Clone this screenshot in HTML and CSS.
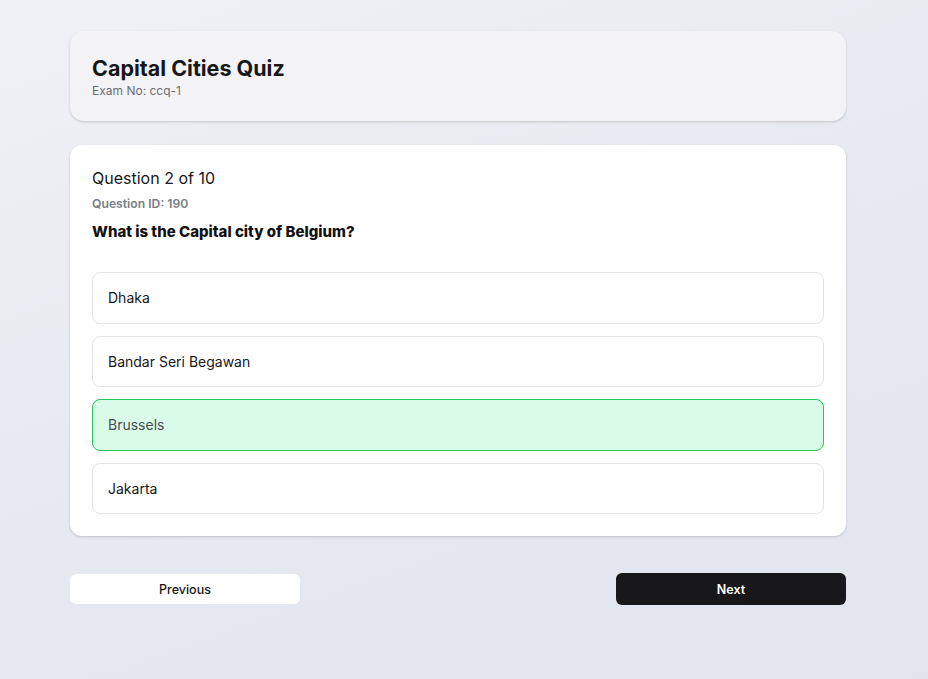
FILE: index.html
```html
<!DOCTYPE html>
<html>
<head>
<meta charset="utf-8">
<link rel="stylesheet" href="styles.css">
</head>
<body>
<div class="page">
  <header class="exam-card">
    <h1 class="exam-title">Capital Cities Quiz</h1>
    <div class="exam-no">Exam No: ccq-1</div>
  </header>
  <section class="question-card">
    <div class="q-count">Question 2 of 10</div>
    <div class="q-id">Question ID: 190</div>
    <div class="q-text">What is the Capital city of Belgium?</div>
    <div class="options">
      <div class="option">Dhaka</div>
      <div class="option">Bandar Seri Begawan</div>
      <div class="option selected">Brussels</div>
      <div class="option">Jakarta</div>
    </div>
  </section>
  <nav class="nav-row">
    <button class="btn btn-prev">Previous</button>
    <button class="btn btn-next">Next</button>
  </nav>
</div>
</body>
</html>
```
FILE: styles.css
```css
html, body {
  margin: 0;
  padding: 0;
  height: 100%;
}
body {
  background: linear-gradient(160deg, #f0f1f6 0%, #e8eaf1 45%, #e1e5ee 100%);
  font-family: Inter, "Liberation Sans", sans-serif;
  color: #111214;
}
.page {
  width: 776px;
  margin-left: 70px;
  padding-top: 31px;
  display: flex;
  flex-direction: column;
}
.exam-card {
  background: #f3f3f6;
  border-radius: 14px;
  height: 90px;
  box-sizing: border-box;
  padding: 24px 22px;
  box-shadow: 0 1px 3px rgba(0,0,0,0.12), 0 1px 2px rgba(0,0,0,0.06);
}
.exam-title {
  margin: 0;
  font-size: 21.5px;
  font-weight: 700;
  line-height: 26px;
  color: #16171a;
}
.exam-no {
  margin-top: 2px;
  font-size: 12px;
  line-height: 16px;
  color: #6b6e74;
}
.question-card {
  margin-top: 24px;
  background: #ffffff;
  border-radius: 12px;
  padding: 22px 22px 22px 22px;
  box-shadow: 0 1px 3px rgba(0,0,0,0.12), 0 1px 2px rgba(0,0,0,0.06);
}
.q-count {
  font-size: 16px;
  line-height: 22px;
  color: #16171a;
}
.q-id {
  margin-top: 7px;
  font-size: 12.2px;
  font-weight: 600;
  line-height: 16px;
  color: #7a7d83;
}
.q-text {
  margin-top: 11px;
  font-size: 15px;
  font-weight: 800;
  line-height: 18px;
  color: #111214;
}
.options {
  margin-top: 31px;
  display: flex;
  flex-direction: column;
  gap: 12px;
}
.option {
  height: 51.5px;
  box-sizing: border-box;
  border: 1px solid #e3e4e8;
  border-radius: 8px;
  padding: 0 15px;
  display: flex;
  align-items: center;
  font-size: 14px;
  color: #16171a;
}
.option.selected {
  background: #dafbe8;
  border-color: #22c55e;
  color: #4a4d52;
}
.nav-row {
  margin-top: 37px;
  display: flex;
  justify-content: space-between;
  align-items: center;
}
.btn {
  width: 230px;
  border: none;
  font-family: Inter, "Liberation Sans", sans-serif;
  font-size: 12.5px;
  font-weight: 500;
  cursor: pointer;
}
.btn-prev {
  height: 30px;
  background: #ffffff;
  border-radius: 6px;
  color: #16171a;
}
.btn-next {
  height: 32px;
  background: #18181b;
  border-radius: 6px;
  color: #ffffff;
  font-weight: 600;
}
```
